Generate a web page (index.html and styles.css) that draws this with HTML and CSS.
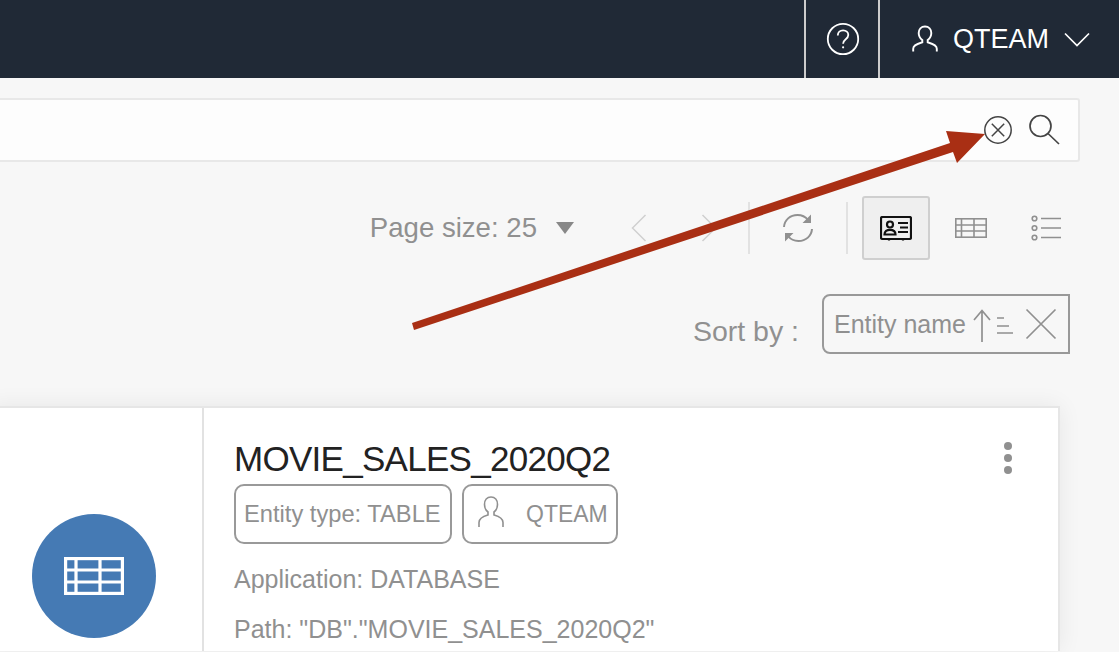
FILE: index.html
```html
<!doctype html>
<html>

<head>
	<meta charset="UTF-8">
	<title>Data catalog search</title>
	<link rel="stylesheet" href="styles.css">
</head>

<body>
	<header class="topbar">
		<div class="topbar_help">
			<svg width="36" height="36" viewBox="0 0 36 36" fill="none" stroke="#fff" stroke-width="1.8">
				<circle cx="18" cy="18" r="15.2" />
				<path d="M12.8 14.4c0-3 2.3-5 5.3-5s5.200 1.900 5.200 4.600c0 2.200-1.300 3.300-2.800 4.400-1.600 1.200-2.400 2-2.400 4.400" />
				<circle cx="18.100" cy="26.300" r="1.100" fill="#fff" stroke="none" />
			</svg>
		</div>
		<div class="topbar_user">
			<svg width="26" height="28" viewBox="0 0 26 28" fill="none" stroke="#fff" stroke-width="1.9">
				<path d="M13 1.500c-3.800 0-6.300 2.900-6.300 6.600 0 3 1.400 5.400 3.600 6.900v2.300c-3 .9-9.100 2.400-9.100 6.400v2.800" />
				<path d="M13 1.500c3.800 0 6.300 2.900 6.300 6.600 0 3-1.400 5.400-3.600 6.900v2.300c3 .9 9.100 2.400 9.100 6.400v2.800" />
			</svg>
			<span class="topbar_name">QTEAM</span>
			<svg width="26" height="15" viewBox="0 0 26 15" fill="none" stroke="#fff" stroke-width="1.7">
				<path d="M1 1.500l12 12 12-12" />
			</svg>
		</div>
	</header>

	<main>
		<div class="search">
			<svg width="30" height="30" viewBox="0 0 30 30" fill="none" stroke="#444" stroke-width="1.500">
				<circle cx="15" cy="15" r="13.200" />
				<path d="M8.800 8.800l12.400 12.400M21.200 8.800L8.800 21.200" />
			</svg>
			<svg class="search_go" width="32" height="32" viewBox="0 0 32 32" fill="none" stroke="#444" stroke-width="1.700">
				<circle cx="12.500" cy="12" r="10.500" />
				<path d="M20 19.500l11 10.500" />
			</svg>
		</div>

		<div class="toolbar">
			<span class="page_size">Page size: 25</span>
			<span class="caret"></span>
			<svg class="pager_prev" width="16" height="28" viewBox="0 0 16 28" fill="none" stroke="#cfcfcf" stroke-width="1.500">
				<path d="M14.500 1L1.500 14l13 13" />
			</svg>
			<svg class="pager_next" width="16" height="28" viewBox="0 0 16 28" fill="none" stroke="#cfcfcf" stroke-width="1.500">
				<path d="M1.500 1l13 13-13 13" />
			</svg>
			<span class="divider divider_first"></span>
			<svg class="refresh" width="32" height="30" viewBox="0 0 32 30" fill="none" stroke="#909090" stroke-width="2">
				<path d="M2 14C2.500 7 8 2 15.500 2c4.500 0 8 1.800 10.500 5" />
				<path d="M30 16c-.5 7-6 12-13.500 12-4.500 0-8-1.800-10.500-5" />
				<path d="M29 1.500V10h-8.500z" fill="#909090" stroke="none" />
				<path d="M3 28.500V20h8.500z" fill="#909090" stroke="none" />
			</svg>
			<span class="divider divider_second"></span>
			<div class="view_btn view_btn_on">
				<svg width="32" height="25" viewBox="0 0 32 25" fill="none" stroke="#111" stroke-width="2.200">
					<rect x="1" y="1" width="30" height="22" rx="1.500" />
					<circle cx="10" cy="8.500" r="3" />
					<path d="M4.500 18.500c0-3.200 2.400-4.700 5.500-4.700s5.500 1.500 5.500 4.700z" />
					<path d="M18 7h10M20 11.500h8M18 16h10" />
					<path d="M9 23v1.500M23 23v1.500" />
				</svg>
			</div>
			<svg class="view_table" width="32" height="20" viewBox="0 0 32 20" fill="none" stroke="#909090" stroke-width="1.600">
				<rect x=".8" y=".8" width="30.400" height="18.400" />
				<path d="M1 7h30M1 13h30M6.500 1v18M19 1v18" />
			</svg>
			<svg class="view_list" width="30" height="26" viewBox="0 0 30 26" fill="none" stroke="#909090" stroke-width="1.600">
				<circle cx="3.500" cy="3.500" r="2.300" />
				<circle cx="3.500" cy="13" r="2.300" />
				<circle cx="3.500" cy="22.500" r="2.300" />
				<path d="M10 3.500h20M10 13h20M10 22.500h20" />
			</svg>
		</div>

		<div class="sort_row">
			<span class="sort_label">Sort by :</span>
			<div class="sort_box">
				<span>Entity name</span>
				<svg class="sort_dir" width="40" height="36" viewBox="0 0 40 36" fill="none" stroke="#909090" stroke-width="1.700">
					<path d="M9 36V5M1 14l8-9.500 8 9.500" />
					<path d="M24 12h7M24 20h12M24 27h16" />
				</svg>
				<svg class="sort_clear" width="32" height="32" viewBox="0 0 32 32" fill="none" stroke="#909090" stroke-width="1.700">
					<path d="M1.500 1.500l29 29M30.500 1.500l-29 29" />
				</svg>
			</div>
		</div>

		<section class="card">
			<div class="card_side">
				<div class="card_badge">
					<svg width="60" height="38" viewBox="0 0 60 38" fill="none" stroke="#fff" stroke-width="3.200">
						<rect x="1.600" y="1.600" width="56.800" height="34.800" />
						<path d="M1 13h58M1 25h58M12 1v36M36 1v36" />
					</svg>
				</div>
			</div>
			<div class="card_body">
				<div class="card_menu"><i></i><i></i><i></i></div>
				<h2>MOVIE_SALES_2020Q2</h2>
				<div class="chips">
					<span class="chip chip_type">Entity type: TABLE</span>
					<span class="chip chip_owner">
						<svg width="26" height="32" viewBox="0 0 26 32" fill="none" stroke="#909090" stroke-width="1.600">
							<path d="M13 1c-4 0-6.500 3-6.500 7.500 0 3.500 1.500 6 3.500 7.500v3c-3.500 1-9 2.500-9 7.500V31" />
							<path d="M13 1c4 0 6.500 3 6.500 7.500 0 3.500-1.500 6-3.500 7.500v3c3.500 1 9 2.500 9 7.500V31" />
						</svg>
						QTEAM
					</span>
				</div>
				<p>Application: DATABASE</p>
				<p>Path: "DB"."MOVIE_SALES_2020Q2"</p>
			</div>
		</section>
	</main>

	<svg class="arrow" width="1119" height="652" viewBox="0 0 1119 652">
		<polygon fill="#a92f14" points="412,323 950,143 946,131 985,134 957,163 953,152 414,330" />
	</svg>
</body>

</html>
```

FILE: styles.css
```css
html,
body {
	height: 652px;
	overflow: hidden;
}

body {
	margin: 0;
	background: #f7f7f7;
	color: #909090;
	font-family: "Liberation Sans", sans-serif;
}

.topbar {
	display: flex;
	justify-content: flex-end;
	height: 78px;
	background: #202936;
	color: #fff;
}

.topbar_help {
	display: flex;
	align-items: center;
	justify-content: center;
	box-sizing: border-box;
	width: 74px;
	padding-left: 2px;
	border-left: 2px solid #ccc;
}

.topbar_user {
	display: flex;
	align-items: center;
	width: 241px;
	box-sizing: border-box;
	padding-left: 32px;
	border-left: 2px solid #ccc;
}

.topbar_name {
	margin: 0 15px 0 15px;
	font-size: 27px;
}

.search {
	display: flex;
	align-items: center;
	justify-content: flex-end;
	box-sizing: border-box;
	height: 64px;
	margin: 20px 39px 0 -10px;
	padding-right: 18px;
	background: #fdfdfd;
	border: 2px solid #e8e8e8;
	border-radius: 3px;
}

.search_go {
	margin-left: 15px;
}

.toolbar {
	display: flex;
	align-items: center;
	justify-content: flex-end;
	height: 64px;
	margin: 34px 58px 0 0;
}

.page_size {
	font-size: 27.6px;
}

.caret {
	width: 0;
	height: 0;
	margin-left: 19px;
	border-top: 12px solid #888;
	border-left: 9px solid transparent;
	border-right: 9px solid transparent;
}

.pager_prev {
	margin-left: 57px;
}

.pager_next {
	margin-left: 54px;
}

.divider {
	width: 2px;
	height: 52px;
	background: #e2e2e2;
}

.divider_first {
	margin-left: 31px;
}

.refresh {
	margin-left: 32px;
}

.divider_second {
	margin-left: 32px;
}

.view_btn {
	display: flex;
	align-items: center;
	justify-content: center;
	box-sizing: border-box;
	width: 68px;
	height: 64px;
	margin-left: 14px;
}

.view_btn_on {
	background: #efefef;
	border: 2px solid #cfcfcf;
	border-radius: 3px;
}

.view_table {
	margin-left: 25px;
}

.view_list {
	margin-left: 44px;
}

.sort_row {
	display: flex;
	align-items: center;
	justify-content: flex-end;
	margin: 34px 49px 0 0;
}

.sort_label {
	margin: 14px 23px 0 0;
	font-size: 28.5px;
}

.sort_box {
	display: flex;
	align-items: center;
	box-sizing: border-box;
	width: 248px;
	height: 60px;
	padding-left: 10px;
	border: 2px solid #999;
	border-radius: 8px 0 0 8px;
	font-size: 25px;
}

.sort_dir {
	margin-left: 7px;
	flex: none;
}

.sort_clear {
	margin-left: 12px;
	flex: none;
}

.card {
	display: flex;
	height: 243px;
	margin: 52px 59px 0 -10px;
	background: #fff;
	border: 2px solid #e6e6e6;
	border-bottom: 0;
	box-shadow: 0 0 22px rgba(0, 0, 0, .07);
}

.card_side {
	display: flex;
	justify-content: center;
	box-sizing: border-box;
	width: 212px;
	padding: 106px 6px 0 0;
	border-right: 2px solid #e2e2e2;
}

.card_badge {
	display: flex;
	align-items: center;
	justify-content: center;
	width: 124px;
	height: 124px;
	border-radius: 50%;
	background: #457ab4;
}

.card_body {
	position: relative;
	flex: 1;
	padding: 29px 0 0 30px;
}

.card_body h2 {
	margin: 0;
	color: #222;
	font-size: 35px;
	font-weight: normal;
	letter-spacing: -.72px;
	line-height: 44px;
}

.card_menu {
	position: absolute;
	top: 34px;
	right: 46px;
	display: flex;
	flex-direction: column;
	gap: 4px;
}

.card_menu i {
	width: 8px;
	height: 8px;
	border-radius: 50%;
	background: #909090;
}

.chips {
	display: flex;
	gap: 10px;
	margin-top: 3px;
}

.chip {
	display: flex;
	align-items: center;
	box-sizing: border-box;
	height: 60px;
	padding-left: 8px;
	border: 2px solid #999;
	border-radius: 10px;
	font-size: 23px;
	white-space: nowrap;
}

.chip_type {
	width: 218px;
	font-size: 23.7px;
}

.chip_owner {
	width: 156px;
	padding-left: 14px;
}

.chip_owner svg {
	margin: -4px 22px 0 0;
}

.card_body p {
	margin: 20px 0 0;
	font-size: 25px;
	line-height: 30px;
}

.arrow {
	position: absolute;
	top: 0;
	left: 0;
	pointer-events: none;
}
```
